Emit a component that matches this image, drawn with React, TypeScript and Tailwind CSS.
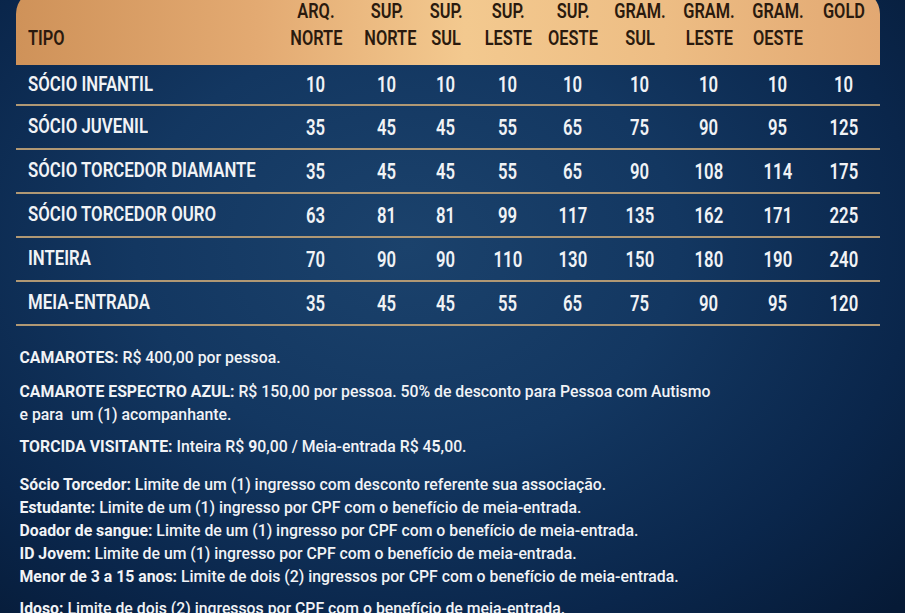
const cols = [
  ["ARQ.", "NORTE"],
  ["SUP.", "NORTE"],
  ["SUP.", "SUL"],
  ["SUP.", "LESTE"],
  ["SUP.", "OESTE"],
  ["GRAM.", "SUL"],
  ["GRAM.", "LESTE"],
  ["GRAM.", "OESTE"],
  ["GOLD", ""],
];

const rows: [string, number[]][] = [
  ["SÓCIO INFANTIL", [10, 10, 10, 10, 10, 10, 10, 10, 10]],
  ["SÓCIO JUVENIL", [35, 45, 45, 55, 65, 75, 90, 95, 125]],
  ["SÓCIO TORCEDOR DIAMANTE", [35, 45, 45, 55, 65, 90, 108, 114, 175]],
  ["SÓCIO TORCEDOR OURO", [63, 81, 81, 99, 117, 135, 162, 171, 225]],
  ["INTEIRA", [70, 90, 90, 110, 130, 150, 180, 190, 240]],
  ["MEIA-ENTRADA", [35, 45, 45, 55, 65, 75, 90, 95, 120]],
];

const rules: [string, string][] = [
  ["Sócio Torcedor:", "Limite de um (1) ingresso com desconto referente sua associação."],
  ["Estudante:", "Limite de um (1) ingresso por CPF com o benefício de meia-entrada."],
  ["Doador de sangue:", "Limite de um (1) ingresso por CPF com o benefício de meia-entrada."],
  ["ID Jovem:", "Limite de um (1) ingresso por CPF com o benefício de meia-entrada."],
  ["Menor de 3 a 15 anos:", "Limite de dois (2) ingressos por CPF com o benefício de meia-entrada."],
];

const grid = "grid grid-cols-[259px_82px_60px_58px_66px_64px_70px_68px_70px_62px]";

// the poster uses a tall condensed face; squeeze Roboto sideways to match
const narrow = "inline-block whitespace-nowrap scale-x-[0.78]";

export default function App() {
  return (
    <div className="h-[613px] w-[905px] overflow-hidden bg-[radial-gradient(ellipse_75%_85%_at_45%_40%,#1b426c_0%,#133761_40%,#0a264b_75%,#061a36_100%)] font-['Roboto','Liberation_Sans',sans-serif] text-[#f1f3f6]">
      <div className="ml-[16px] w-[864px]">
        <div className={`${grid} -mt-[10px] h-[75px] rounded-t-[24px] bg-[linear-gradient(90deg,#cf9259_0%,#e3aa72_28%,#f3c98f_52%,#edbd84_75%,#e2a872_100%)] pt-[10px] text-[21px] font-semibold leading-[22px] text-[#2a1a0e]`}>
          <div className="pl-[12px]">
            <div className="h-[22px]" />
            <div className="mt-[5px]">
              <span className={`${narrow} origin-left`}>TIPO</span>
            </div>
          </div>
          {cols.map(([a, b], i) => (
            <div key={i} className="text-center">
              <div className="h-[22px]">
                <span className={narrow}>{a}</span>
              </div>
              <div className="mt-[5px] h-[22px]">
                <span className={narrow}>{b}</span>
              </div>
            </div>
          ))}
        </div>

        {rows.map(([label, vals], r) => (
          <div
            key={label}
            className={`${grid} items-center border-b-2 border-[#b09874] font-semibold ${r === 0 ? "h-[41px]" : "h-[44px]"}`}
          >
            <div className="pl-[12px] text-[21px]">
              <span className="inline-block origin-left scale-x-[0.8] whitespace-nowrap">{label}</span>
            </div>
            {vals.map((v, i) => (
              <div key={i} className="text-center text-[22px]">
                <span className="inline-block whitespace-nowrap scale-x-[0.76]">{v}</span>
              </div>
            ))}
          </div>
        ))}
      </div>

      <div className="mt-[20px] w-[1000px] origin-left scale-x-[0.93] pl-[21px] text-[17px] font-medium leading-[23px]">
        <p className="whitespace-nowrap">
          <b>CAMAROTES:</b> R$ 400,00 por pessoa.
        </p>
        <p className="mt-[11px] whitespace-nowrap">
          <b>CAMAROTE ESPECTRO AZUL:</b> R$ 150,00 por pessoa. 50% de desconto para Pessoa com Autismo
          <br />e para&nbsp; um (1) acompanhante.
        </p>
        <p className="mt-[9px] whitespace-nowrap">
          <b>TORCIDA VISITANTE:</b> Inteira R$ <b>9</b>0,00 / Meia-entrada R$ 4<b>5</b>,00.
        </p>
        <div className="mt-[15px]">
          {rules.map(([k, v]) => (
            <p key={k} className="whitespace-nowrap">
              <b>{k}</b> {v}
            </p>
          ))}
          <p className="mt-[9px] whitespace-nowrap">
            <b>Idoso:</b> Limite de dois (2) ingressos por CPF com o benefício de meia-entrada.
          </p>
        </div>
      </div>
    </div>
  );
}
